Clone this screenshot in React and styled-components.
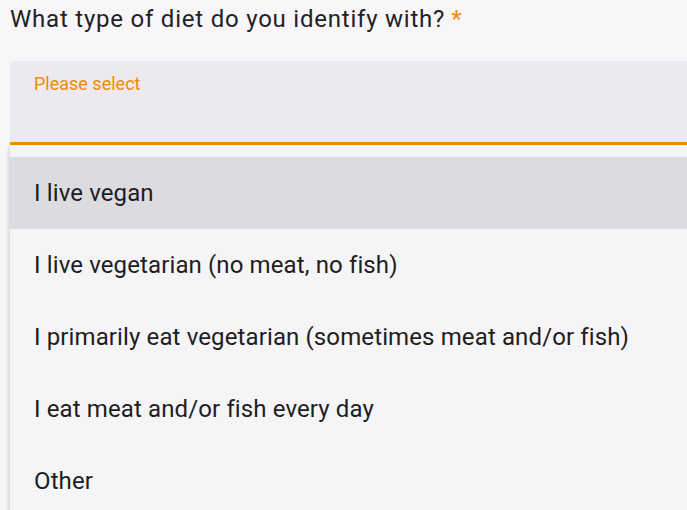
import React from "react";
import styled, { createGlobalStyle } from "styled-components";

const Global = createGlobalStyle`
  html {
    overflow: hidden;
  }
  body {
    margin: 0;
    background: #f8f6f9;
    font-family: Roboto, "Noto Sans", sans-serif;
  }
`;

const Page = styled.main`
  width: 740px;
  padding-left: 10px;
`;

const Question = styled.h2`
  margin: 0;
  padding-top: 4px;
  font-size: 24px;
  line-height: 30px;
  font-weight: 400;
  letter-spacing: 0.78px;
  color: #222124;
  .star {
    color: #f28b00;
    margin-left: 6px;
  }
`;

const Select = styled.div`
  margin-top: 27px;
`;

const Field = styled.div`
  height: 81px;
  background: #ece9f0;
  border-radius: 4px 4px 0 0;
  border-bottom: 3px solid #f28b00;
  padding: 0 24px;
  .label {
    display: block;
    padding-top: 12px;
    font-size: 18px;
    line-height: 22px;
    color: #f28b00;
  }
`;

const Menu = styled.ul`
  margin: 0;
  padding: 12px 0 0;
  list-style: none;
  background: #f5f5f7;
  box-shadow: -1px 2px 4px rgba(0, 0, 0, 0.18);
`;

const Option = styled.li`
  height: 72px;
  display: flex;
  align-items: center;
  padding: 0 24px;
  font-size: 24px;
  letter-spacing: 0.12px;
  color: #1e1d21;
  background: ${({ $active }) => ($active ? "#dcdbdf" : "transparent")};
`;

const options = [
  "I live vegan",
  "I live vegetarian (no meat, no fish)",
  "I primarily eat vegetarian (sometimes meat and/or fish)",
  "I eat meat and/or fish every day",
  "Other",
];

export default function App() {
  return (
    <Page>
      <Global />
      <Question>
        What type of diet do you identify with?<span className="star">*</span>
      </Question>
      <Select>
        <Field>
          <span className="label">Please select</span>
        </Field>
        <Menu>
          {options.map((o, i) => (
            <Option key={o} $active={i === 0}>
              {o}
            </Option>
          ))}
        </Menu>
      </Select>
    </Page>
  );
}
